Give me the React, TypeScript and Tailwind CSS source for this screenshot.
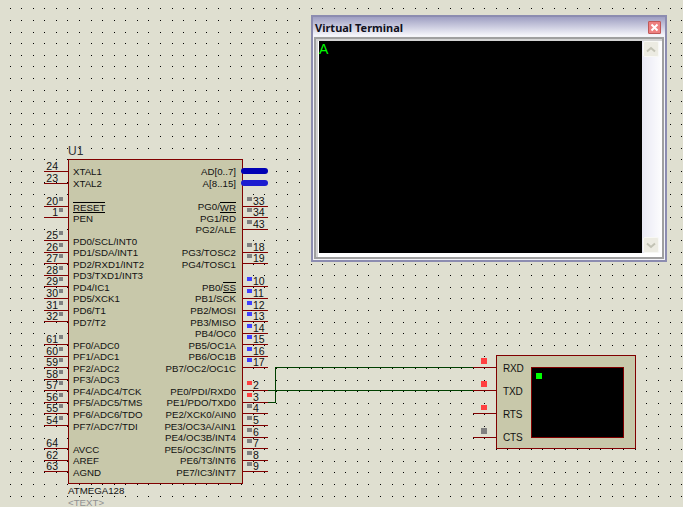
type Pin = { n: number; num: string; label: string; dot?: 'gray' | 'blue' | 'red'; bar?: string };

const leftPins: Pin[] = [
  { n: 0, num: '24', label: 'XTAL1' },
  { n: 1, num: '23', label: 'XTAL2' },
  { n: 3, num: '20', label: '', bar: 'RESET', dot: 'gray' },
  { n: 4, num: '1', label: 'PEN', dot: 'gray' },
  { n: 6, num: '25', label: 'PD0/SCL/INT0', dot: 'gray' },
  { n: 7, num: '26', label: 'PD1/SDA/INT1', dot: 'gray' },
  { n: 8, num: '27', label: 'PD2/RXD1/INT2', dot: 'gray' },
  { n: 9, num: '28', label: 'PD3/TXD1/INT3', dot: 'gray' },
  { n: 10, num: '29', label: 'PD4/IC1', dot: 'gray' },
  { n: 11, num: '30', label: 'PD5/XCK1', dot: 'gray' },
  { n: 12, num: '31', label: 'PD6/T1', dot: 'gray' },
  { n: 13, num: '32', label: 'PD7/T2', dot: 'gray' },
  { n: 15, num: '61', label: 'PF0/ADC0', dot: 'gray' },
  { n: 16, num: '60', label: 'PF1/ADC1', dot: 'gray' },
  { n: 17, num: '59', label: 'PF2/ADC2', dot: 'gray' },
  { n: 18, num: '58', label: 'PF3/ADC3', dot: 'gray' },
  { n: 19, num: '57', label: 'PF4/ADC4/TCK', dot: 'gray' },
  { n: 20, num: '56', label: 'PF5/ADC5/TMS', dot: 'gray' },
  { n: 21, num: '55', label: 'PF6/ADC6/TDO', dot: 'gray' },
  { n: 22, num: '54', label: 'PF7/ADC7/TDI', dot: 'gray' },
  { n: 24, num: '64', label: 'AVCC' },
  { n: 25, num: '62', label: 'AREF' },
  { n: 26, num: '63', label: 'AGND' },
];

const rightPins: Pin[] = [
  { n: 3, num: '33', label: 'PG0/', bar: 'WR', dot: 'gray' },
  { n: 4, num: '34', label: 'PG1/RD', dot: 'gray' },
  { n: 5, num: '43', label: 'PG2/ALE', dot: 'gray' },
  { n: 7, num: '18', label: 'PG3/TOSC2', dot: 'gray' },
  { n: 8, num: '19', label: 'PG4/TOSC1', dot: 'gray' },
  { n: 10, num: '10', label: 'PB0/', bar: 'SS', dot: 'blue' },
  { n: 11, num: '11', label: 'PB1/SCK', dot: 'blue' },
  { n: 12, num: '12', label: 'PB2/MOSI', dot: 'blue' },
  { n: 13, num: '13', label: 'PB3/MISO', dot: 'blue' },
  { n: 14, num: '14', label: 'PB4/OC0', dot: 'blue' },
  { n: 15, num: '15', label: 'PB5/OC1A', dot: 'blue' },
  { n: 16, num: '16', label: 'PB6/OC1B', dot: 'blue' },
  { n: 17, num: '17', label: 'PB7/OC2/OC1C', dot: 'blue' },
  { n: 19, num: '2', label: 'PE0/PDI/RXD0', dot: 'red' },
  { n: 20, num: '3', label: 'PE1/PDO/TXD0', dot: 'red' },
  { n: 21, num: '4', label: 'PE2/XCK0/AIN0', dot: 'gray' },
  { n: 22, num: '5', label: 'PE3/OC3A/AIN1', dot: 'gray' },
  { n: 23, num: '6', label: 'PE4/OC3B/INT4', dot: 'gray' },
  { n: 24, num: '7', label: 'PE5/OC3C/INT5', dot: 'gray' },
  { n: 25, num: '8', label: 'PE6/T3/INT6', dot: 'gray' },
  { n: 26, num: '9', label: 'PE7/IC3/INT7', dot: 'gray' },
];

const dotClass = { gray: 'bg-[#808080]', blue: 'bg-[#4040ff]', red: 'bg-[#ff4040]' };

const gridDots: { x: number; y: number }[] = [];
for (let i = 0; i < 59; i++) {
  for (let j = 0; j < 44; j++) {
    gridDots.push({ x: Math.floor(10 + i * 11.58), y: Math.floor(8.9 + j * 11.6) });
  }
}

const Schematic = () => (
  <svg className="absolute left-0 top-0" width={683} height={507} shapeRendering="crispEdges">
    {gridDots.map((d, i) => (
      <rect key={i} x={d.x} y={d.y} width={1} height={1} fill="#000" />
    ))}
    {/* wires between the chip and the terminal */}
    <path d="M266 390.5H473" stroke="#004000" fill="none" />
    <path d="M266 402.5H275.5V367.5H473" stroke="#004000" fill="none" />
    <path d="M473 367.5H496M473 390.5H496M473 413.5H496M473 437.5H496" stroke="#800000" fill="none" />
    <rect x={481} y={358} width={6} height={6} fill="#ff4040" />
    <rect x={481} y={381} width={6} height={6} fill="#ff4040" />
    <rect x={481} y={405} width={6} height={5} fill="#ff4040" />
    <rect x={481} y={428} width={6} height={6} fill="#808080" />
  </svg>
);

const Overbar = ({ text }: { text: string }) => (
  <span className="border-y border-black leading-[9px] inline-block">{text}</span>
);

const PinLabel = ({ pin, right }: { pin: Pin; right?: boolean }) => (
  <span
    className={`flex items-center text-[9.7px] leading-[12px] whitespace-nowrap ${
      right ? 'col-start-2 justify-end' : 'col-start-1'
    }`}
    style={{ gridRowStart: pin.n + 1 }}
  >
    {pin.label}
    {pin.bar && <Overbar text={pin.bar} />}
  </span>
);

const LeftPin = ({ pin }: { pin: Pin }) => (
  <div className="flex items-end border-b border-[#800000]" style={{ gridRowStart: pin.n + 1 }}>
    <span className="w-[13px] ml-px text-right text-[10.5px] leading-[12px] mb-[-1px] shrink-0">{pin.num}</span>
    {pin.dot && <span className={`w-[4px] h-[4px] ml-px mb-[5px] shrink-0 ${dotClass[pin.dot]}`} />}
  </div>
);

const RightPin = ({ pin }: { pin: Pin }) => (
  <div className="flex items-end border-b border-[#800000]" style={{ gridRowStart: pin.n + 1 }}>
    {pin.dot && <span className={`w-[5px] h-[4px] ml-[4px] mb-[5px] shrink-0 ${dotClass[pin.dot]}`} />}
    <span className="ml-px text-[10.5px] leading-[12px] mb-[-1px] shrink-0">{pin.num}</span>
  </div>
);

const Chip = () => (
  <div className="absolute left-[44px] top-[144px] flex flex-col">
    <div className="ml-[24px] h-[15px] text-[12px] leading-[14px] text-[#333]">U1</div>
    <div className="flex">
      <div className="w-[24px] pt-[1.45px] grid grid-rows-[repeat(27,11.55px)]">
        {leftPins.map((p) => (
          <LeftPin key={p.num} pin={p} />
        ))}
      </div>
      <div className="w-[175px] h-[325px] bg-[#c8c8aa] border border-[#800000] pl-[4px] pt-[6.7px] pr-[6px] grid grid-cols-2 grid-rows-[repeat(27,11.55px)]">
        {leftPins.map((p) => (
          <PinLabel key={p.num} pin={p} />
        ))}
        {rightPins.map((p) => (
          <PinLabel key={p.num} pin={p} right />
        ))}
        <span className="col-start-2 row-start-1 flex justify-end items-center text-[9.7px] leading-[12px]">AD[0..7]</span>
        <span className="col-start-2 row-start-2 flex justify-end items-center text-[9.7px] leading-[12px]">A[8..15]</span>
      </div>
      <div className="w-[24px] pt-[1.45px] grid grid-rows-[repeat(27,11.55px)]">
        <div className="row-start-1 flex items-end">
          <div className="ml-[-2px] mb-[-2px] w-[27px] h-[6px] rounded-full bg-[#0000b4]" />
        </div>
        <div className="row-start-2 flex items-end">
          <div className="ml-[-2px] mb-[-2px] w-[27px] h-[6px] rounded-full bg-[#1c1cd0]" />
        </div>
        {rightPins.map((p) => (
          <RightPin key={p.num} pin={p} />
        ))}
      </div>
    </div>
    <div className="ml-[24px] mt-px text-[9.7px] leading-[12px]">ATMEGA128</div>
    <div className="ml-[24px] text-[9.7px] leading-[11px] text-[#909090]">&lt;TEXT&gt;</div>
  </div>
);

const TerminalSymbol = () => (
  <div className="absolute left-[496px] top-[355px] w-[140px] h-[94px] bg-[#c8c8aa] border border-[#800000] flex">
    <div className="w-[34px] pl-[6px] pt-[7px] flex flex-col gap-[11px] text-[10px] leading-[12px] tracking-[-0.2px]">
      <span>RXD</span>
      <span>TXD</span>
      <span>RTS</span>
      <span>CTS</span>
    </div>
    <div className="mt-[11px] w-[93px] h-[71px] bg-black border border-[#800000] pl-[4px] pt-[5px]">
      <div className="w-[6px] h-[6px] bg-[#00ff00]" />
    </div>
  </div>
);

const ScrollButton = ({ down }: { down?: boolean }) => (
  <div className="w-[16px] h-[16px] bg-[#ecebe2] border border-[#f8f8f4] rounded-[2px] flex items-center justify-center">
    <svg width="10" height="7" viewBox="0 0 10 7">
      <path
        d={down ? 'M1 1.5L5 5L9 1.5' : 'M1 5.5L5 2L9 5.5'}
        stroke="#c2c2b4"
        strokeWidth="2"
        fill="none"
      />
    </svg>
  </div>
);

const TerminalWindow = () => (
  <div className="absolute left-[311px] top-[15px] w-[356px] h-[247px] border-2 border-[#8c8cb0] bg-[#f4f4f8] flex flex-col">
    <div className="h-[19px] mb-px shrink-0 bg-gradient-to-b from-[#9f9fc2] to-[#f8f8fc] flex items-center justify-between pl-[2px] pr-[4px]">
      <span className="font-['Noto_Sans'] font-bold text-[11px] leading-[14px] mt-[2px] text-[#10101c]">Virtual Terminal</span>
      <div className="w-[13px] h-[13px] mt-[2px] bg-[#ee8080] border border-[#c05858] rounded-[1px] flex items-center justify-center">
        <svg width="9" height="9" viewBox="0 0 9 9">
          <path d="M1.5 1.5L7.5 7.5M7.5 1.5L1.5 7.5" stroke="#fff" strokeWidth="2" />
        </svg>
      </div>
    </div>
    <div className="flex-1 mx-px mb-px border-[2px] border-[#a0a0a0] flex min-h-0 bg-white">
      <div className="flex-1 min-w-0 border-t-2 border-l-2 border-[#d4d4d4] flex pl-px pb-[4px] pr-[2px]">
        <div className="flex-1 bg-black pt-px">
          <span className="block text-[14px] leading-[15px] text-[#00ff00]">A</span>
        </div>
        <div className="w-[18px] bg-gradient-to-r from-[#e8e8f4] to-[#fbfbfd] flex flex-col justify-between items-center">
          <ScrollButton />
          <ScrollButton down />
        </div>
      </div>
    </div>
  </div>
);

export default function App() {
  return (
    <div className="relative w-[683px] h-[507px] overflow-hidden bg-[#dfdfd0] font-['Liberation_Sans',sans-serif] text-[#111]">
      <Schematic />
      <TerminalWindow />
      <Chip />
      <TerminalSymbol />
    </div>
  );
}
